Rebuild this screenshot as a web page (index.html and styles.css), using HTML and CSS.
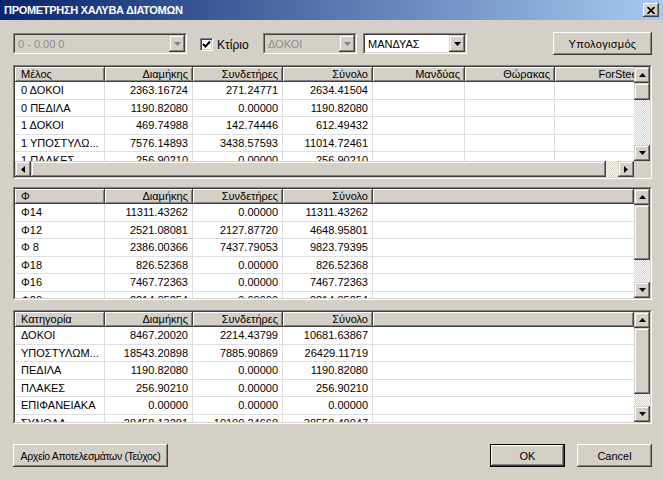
FILE: index.html
```html
<!DOCTYPE html>
<html lang="el">
<head>
<meta charset="utf-8">
<title>ΠΡΟΜΕΤΡΗΣΗ ΧΑΛΥΒΑ ΔΙΑΤΟΜΩΝ</title>
<link rel="stylesheet" href="styles.css">
</head>
<body>
<div class="window">
  <div class="titlebar">
    <span class="title">ΠΡΟΜΕΤΡΗΣΗ ΧΑΛΥΒΑ ΔΙΑΤΟΜΩΝ</span>
    <span class="close"><svg width="8" height="7" viewBox="0 0 8 7"><path d="M0.5 0L7.5 7M7.5 0L0.5 7" stroke="#000" stroke-width="1.7"/></svg></span>
  </div>
  <div class="content">
    <div class="toolbar">
      <div class="combo disabled w1"><div class="combo-inner"><span class="combo-text">0 - 0.00 0</span><span class="dd"><svg width="7" height="4" viewBox="0 0 7 4"><path d="M0 0h7L3.5 4z" fill="#808080"/></svg></span></div></div>
      <div class="checkgroup">
        <span class="checkbox"><svg width="9" height="9" viewBox="0 0 9 9"><polyline points="1,4 3.5,6.5 8,1.5" fill="none" stroke="#000" stroke-width="2"/></svg></span>
        <span class="checklabel">Κτίριο</span>
      </div>
      <div class="combo disabled w2"><div class="combo-inner"><span class="combo-text">ΔΟΚΟΙ</span><span class="dd"><svg width="7" height="4" viewBox="0 0 7 4"><path d="M0 0h7L3.5 4z" fill="#808080"/></svg></span></div></div>
      <div class="combo w3"><div class="combo-inner"><span class="combo-text">ΜΑΝΔΥΑΣ</span><span class="dd"><svg width="7" height="4" viewBox="0 0 7 4"><path d="M0 0h7L3.5 4z" fill="#000"/></svg></span></div></div>
      <div class="btn calc">Υπολογισμός</div>
    </div>

    <div class="grid grid-hs g1">
      <div class="grid-inner">
        <div class="table">
          <div class="row head">
            <div class="hcell c0 left">Μέλος</div>
            <div class="hcell c1">Διαμήκης</div>
            <div class="hcell c2">Συνδετήρες</div>
            <div class="hcell c3">Σύνολο</div>
            <div class="hcell c4">Μανδύας</div>
            <div class="hcell c5">Θώρακας</div>
            <div class="hcell c6">ForSteel</div>
          </div>
          <div class="row"><div class="cell c0 left">0 ΔΟΚΟΙ</div><div class="cell c1">2363.16724</div><div class="cell c2">271.24771</div><div class="cell c3">2634.41504</div><div class="cell c4"></div><div class="cell c5"></div><div class="cell c6"></div></div>
          <div class="row"><div class="cell c0 left">0 ΠΕΔΙΛΑ</div><div class="cell c1">1190.82080</div><div class="cell c2">0.00000</div><div class="cell c3">1190.82080</div><div class="cell c4"></div><div class="cell c5"></div><div class="cell c6"></div></div>
          <div class="row"><div class="cell c0 left">1 ΔΟΚΟΙ</div><div class="cell c1">469.74988</div><div class="cell c2">142.74446</div><div class="cell c3">612.49432</div><div class="cell c4"></div><div class="cell c5"></div><div class="cell c6"></div></div>
          <div class="row"><div class="cell c0 left">1 ΥΠΟΣΤΥΛΩ...</div><div class="cell c1">7576.14893</div><div class="cell c2">3438.57593</div><div class="cell c3">11014.72461</div><div class="cell c4"></div><div class="cell c5"></div><div class="cell c6"></div></div>
          <div class="row"><div class="cell c0 left">1 ΠΛΑΚΕΣ</div><div class="cell c1">256.90210</div><div class="cell c2">0.00000</div><div class="cell c3">256.90210</div><div class="cell c4"></div><div class="cell c5"></div><div class="cell c6"></div></div>
        </div>
        <div class="vscroll">
          <span class="sbtn"><svg width="7" height="4" viewBox="0 0 7 4"><path d="M3.5 0L7 4H0z" fill="#000"/></svg></span>
          <span class="thumb t1"></span>
          <span class="track"></span>
          <span class="sbtn"><svg width="7" height="4" viewBox="0 0 7 4"><path d="M0 0h7L3.5 4z" fill="#000"/></svg></span>
        </div>
        <div class="hscroll">
          <span class="sbtn"><svg width="4" height="7" viewBox="0 0 4 7"><path d="M0 3.5L4 0v7z" fill="#000"/></svg></span>
          <span class="thumb hthumb"></span>
          <span class="track htrack"></span>
          <span class="sbtn"><svg width="4" height="7" viewBox="0 0 4 7"><path d="M0 0l4 3.5L0 7z" fill="#000"/></svg></span>
        </div>
        <div class="corner"></div>
      </div>
    </div>

    <div class="grid g2">
      <div class="grid-inner">
        <div class="table">
          <div class="row head">
            <div class="hcell c0 left">Φ</div>
            <div class="hcell c1">Διαμήκης</div>
            <div class="hcell c2">Συνδετήρες</div>
            <div class="hcell c3">Σύνολο</div>
            <div class="hcell fill"></div>
          </div>
          <div class="row"><div class="cell c0 left">Φ14</div><div class="cell c1">11311.43262</div><div class="cell c2">0.00000</div><div class="cell c3">11311.43262</div><div class="cell fill"></div></div>
          <div class="row"><div class="cell c0 left">Φ12</div><div class="cell c1">2521.08081</div><div class="cell c2">2127.87720</div><div class="cell c3">4648.95801</div><div class="cell fill"></div></div>
          <div class="row"><div class="cell c0 left">Φ 8</div><div class="cell c1">2386.00366</div><div class="cell c2">7437.79053</div><div class="cell c3">9823.79395</div><div class="cell fill"></div></div>
          <div class="row"><div class="cell c0 left">Φ18</div><div class="cell c1">826.52368</div><div class="cell c2">0.00000</div><div class="cell c3">826.52368</div><div class="cell fill"></div></div>
          <div class="row"><div class="cell c0 left">Φ16</div><div class="cell c1">7467.72363</div><div class="cell c2">0.00000</div><div class="cell c3">7467.72363</div><div class="cell fill"></div></div>
          <div class="row"><div class="cell c0 left">Φ20</div><div class="cell c1">2214.85254</div><div class="cell c2">0.00000</div><div class="cell c3">2214.85254</div><div class="cell fill"></div></div>
        </div>
        <div class="vscroll">
          <span class="sbtn"><svg width="7" height="4" viewBox="0 0 7 4"><path d="M3.5 0L7 4H0z" fill="#000"/></svg></span>
          <span class="thumb t2"></span>
          <span class="track"></span>
          <span class="sbtn"><svg width="7" height="4" viewBox="0 0 7 4"><path d="M0 0h7L3.5 4z" fill="#000"/></svg></span>
        </div>
      </div>
    </div>

    <div class="grid g3">
      <div class="grid-inner">
        <div class="table">
          <div class="row head">
            <div class="hcell c0 left">Κατηγορία</div>
            <div class="hcell c1">Διαμήκης</div>
            <div class="hcell c2">Συνδετήρες</div>
            <div class="hcell c3">Σύνολο</div>
            <div class="hcell fill"></div>
          </div>
          <div class="row"><div class="cell c0 left">ΔΟΚΟΙ</div><div class="cell c1">8467.20020</div><div class="cell c2">2214.43799</div><div class="cell c3">10681.63867</div><div class="cell fill"></div></div>
          <div class="row"><div class="cell c0 left">ΥΠΟΣΤΥΛΩΜ...</div><div class="cell c1">18543.20898</div><div class="cell c2">7885.90869</div><div class="cell c3">26429.11719</div><div class="cell fill"></div></div>
          <div class="row"><div class="cell c0 left">ΠΕΔΙΛΑ</div><div class="cell c1">1190.82080</div><div class="cell c2">0.00000</div><div class="cell c3">1190.82080</div><div class="cell fill"></div></div>
          <div class="row"><div class="cell c0 left">ΠΛΑΚΕΣ</div><div class="cell c1">256.90210</div><div class="cell c2">0.00000</div><div class="cell c3">256.90210</div><div class="cell fill"></div></div>
          <div class="row"><div class="cell c0 left">ΕΠΙΦΑΝΕΙΑΚΑ</div><div class="cell c1">0.00000</div><div class="cell c2">0.00000</div><div class="cell c3">0.00000</div><div class="cell fill"></div></div>
          <div class="row"><div class="cell c0 left">ΣΥΝΟΛΑ</div><div class="cell c1">28458.13281</div><div class="cell c2">10100.24668</div><div class="cell c3">38558.48047</div><div class="cell fill"></div></div>
        </div>
        <div class="vscroll">
          <span class="sbtn"><svg width="7" height="4" viewBox="0 0 7 4"><path d="M3.5 0L7 4H0z" fill="#000"/></svg></span>
          <span class="thumb t3"></span>
          <span class="track"></span>
          <span class="sbtn"><svg width="7" height="4" viewBox="0 0 7 4"><path d="M0 0h7L3.5 4z" fill="#000"/></svg></span>
        </div>
      </div>
    </div>

    <div class="bottombar">
      <div class="btn file">Αρχείο Αποτελεσμάτων (Τεύχος)</div>
      <div class="spacer"></div>
      <div class="btn default ok">OK</div>
      <div class="btn cancel">Cancel</div>
    </div>
  </div>
</div>
</body>
</html>
```

FILE: styles.css
```css
* { box-sizing: border-box; }
html, body { margin: 0; padding: 0; }
body {
  width: 663px;
  height: 480px;
  overflow: hidden;
  background: #d4d0c8;
  font-family: "Liberation Sans", Arial, sans-serif;
  font-size: 11px;
  color: #000;
}
.window {
  width: 663px;
  height: 480px;
  display: flex;
  flex-direction: column;
}
.titlebar {
  height: 20px;
  flex: none;
  display: flex;
  align-items: center;
  padding: 0 4px 0 4px;
  background: linear-gradient(to right, #0a246a, #a6caf0);
}
.title {
  flex: 1;
  color: #fff;
  font-weight: bold;
  font-size: 11px;
  letter-spacing: -0.3px;
}
.close {
  width: 16px;
  height: 14px;
  background: #d4d0c8;
  display: flex;
  align-items: center;
  justify-content: center;
  box-shadow: inset -1px -1px #404040, inset 1px 1px #fff, inset -2px -2px #808080;
}
.content {
  flex: 1;
  display: flex;
  flex-direction: column;
  padding: 12px 11px 0 13px;
}

/* toolbar */
.toolbar {
  height: 23px;
  display: flex;
  align-items: flex-start;
}
.combo {
  height: 21px;
  margin-top: 1px;
  border: 1px solid;
  border-color: #808080 #fff #fff #808080;
  flex: none;
}
.combo-inner {
  height: 100%;
  border: 1px solid;
  border-color: #404040 #d4d0c8 #d4d0c8 #404040;
  background: #fff;
  display: flex;
  align-items: center;
}
.combo.disabled .combo-inner {
  background: #d4d0c8;
  color: #8d8d8d;
}
.combo-text {
  flex: 1;
  padding-left: 3px;
  white-space: nowrap;
  overflow: hidden;
}
.dd {
  width: 16px;
  height: 17px;
  flex: none;
  background: #d4d0c8;
  display: flex;
  align-items: center;
  justify-content: center;
  box-shadow: inset -1px -1px #404040, inset 1px 1px #d4d0c8, inset -2px -2px #808080, inset 2px 2px #fff;
}
.w1 { width: 174px; }
.w2 { width: 94px; }
.w3 { width: 104px; margin-left: 6px; }
.checkgroup {
  width: 76px;
  height: 23px;
  flex: none;
  display: flex;
  align-items: center;
  padding-left: 13px;
  padding-top: 2px;
}
.checkbox {
  width: 13px;
  height: 13px;
  background: #fff;
  border: 1px solid;
  border-color: #808080 #fff #fff #808080;
  box-shadow: inset 1px 1px #404040, inset -1px -1px #d4d0c8;
  display: flex;
  align-items: center;
  justify-content: center;
}
.checklabel {
  margin-left: 4px;
  font-size: 12px;
}
.btn {
  height: 23px;
  background: #d4d0c8;
  display: flex;
  align-items: center;
  justify-content: center;
  white-space: nowrap;
  box-shadow: inset -1px -1px #404040, inset 1px 1px #fff, inset -2px -2px #808080, inset 2px 2px #d4d0c8;
}
.btn.default {
  border: 1px solid #000;
}
.calc {
  width: 99px;
  margin-left: auto;
  letter-spacing: 0.3px;
}

/* grids */
.grid {
  border: 1px solid;
  border-color: #808080 #fff #fff #808080;
  flex: none;
}
.grid-inner {
  height: 100%;
  border: 1px solid;
  border-color: #404040 #d4d0c8 #d4d0c8 #404040;
  background: #fff;
  display: grid;
  grid-template-columns: minmax(0, 1fr) 16px;
  grid-template-rows: minmax(0, 1fr);
}
.grid-hs .grid-inner {
  grid-template-rows: minmax(0, 1fr) 16px;
}
.g1 { height: 114px; margin-top: 10px; }
.g2 { height: 113px; margin-top: 8px; }
.g3 { height: 114px; margin-top: 10px; }

.table {
  overflow: hidden;
  min-width: 0;
}
.row {
  display: flex;
  height: 17.5px;
}
.row.head {
  height: 15px;
}
.cell, .hcell {
  flex: none;
  white-space: nowrap;
  overflow: hidden;
  text-align: right;
  padding: 0 4px 0 4px;
}
.cell {
  line-height: 17px;
  border-right: 1px solid #dedede;
  border-bottom: 1px solid #dedede;
}
.hcell {
  line-height: 15px;
  background: #d4d0c8;
  box-shadow: inset -1px -1px #404040, inset 1px 1px #fff, inset -2px -2px #808080;
  padding-right: 5px;
}
.left { text-align: left; padding-left: 6px; }
.cell.fill, .hcell.fill { flex: 1; }
.cell.fill { border-right: none; }
.c0 { width: 90px; }
.c1 { width: 88px; }
.c2 { width: 90px; }
.c3 { width: 90px; }
.c4 { width: 92px; }
.c5 { width: 90px; }
.c6 { width: 90px; }

/* scrollbars */
.vscroll {
  display: flex;
  flex-direction: column;
  min-height: 0;
}
.hscroll {
  display: flex;
}
.sbtn {
  width: 16px;
  height: 16px;
  flex: none;
  background: #d4d0c8;
  display: flex;
  align-items: center;
  justify-content: center;
  box-shadow: inset -1px -1px #404040, inset 1px 1px #d4d0c8, inset -2px -2px #808080, inset 2px 2px #fff;
}
.thumb {
  flex: none;
  background: #d4d0c8;
  box-shadow: inset -1px -1px #404040, inset 1px 1px #d4d0c8, inset -2px -2px #808080, inset 2px 2px #fff;
}
.t1 { height: 17px; }
.t2 { height: 55px; }
.t3 { height: 66px; }
.hthumb { flex: 1; height: 16px; }
.track {
  flex: 1;
  background: repeating-conic-gradient(#d4d0c8 0% 25%, #fff 0% 50%) 0 0 / 2px 2px;
}
.htrack {
  flex: none;
  width: 12px;
}
.corner {
  background: #d4d0c8;
}

/* bottom */
.bottombar {
  display: flex;
  margin-top: 20px;
  height: 23px;
}
.file {
  width: 155px;
  font-size: 10.5px;
  letter-spacing: -0.35px;
}
.spacer { flex: 1; }
.ok { width: 75px; }
.cancel { width: 75px; margin-left: 12px; }
```
